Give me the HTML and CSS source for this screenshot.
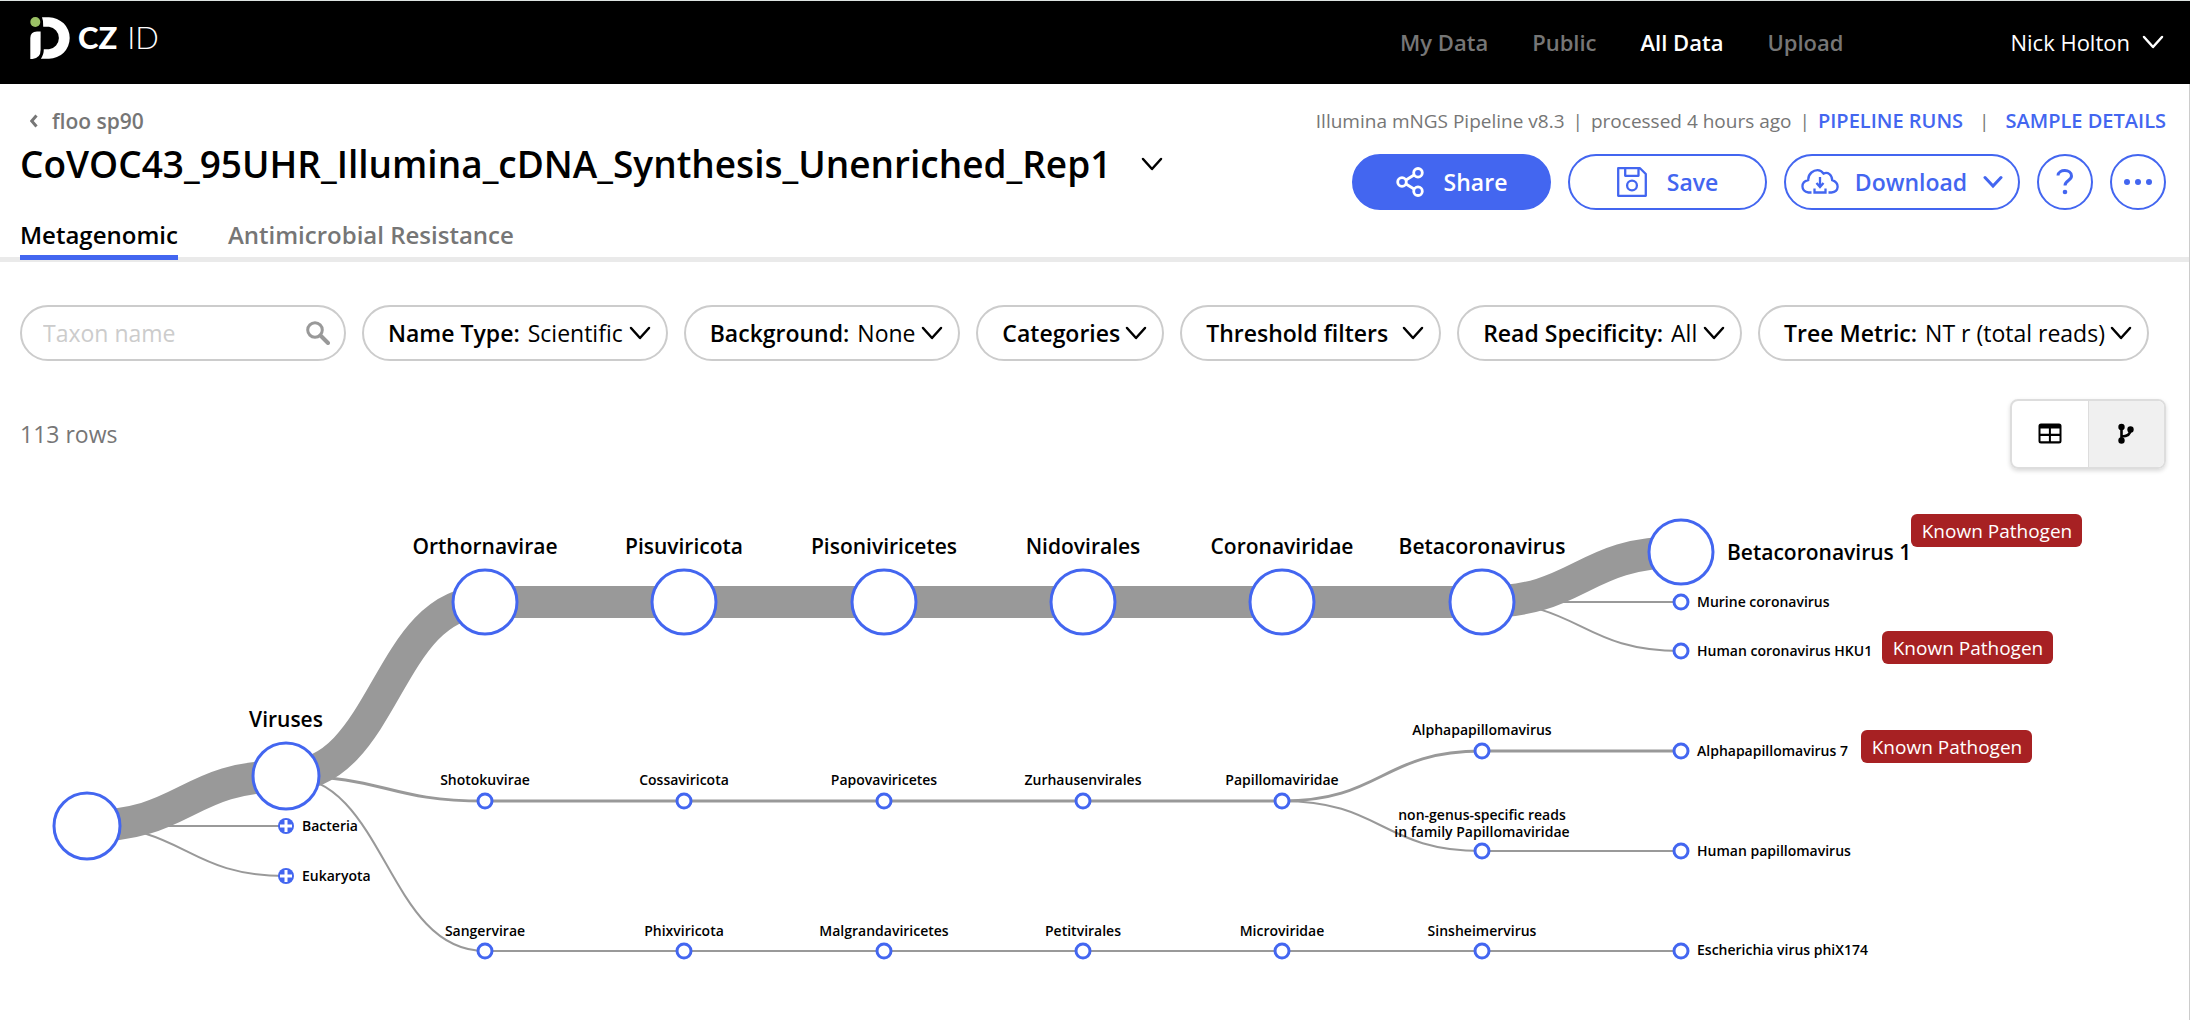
FILE: index.html
```html
<!DOCTYPE html>
<html lang="en">
<head>
<meta charset="utf-8">
<title>CZ ID</title>
<link rel="stylesheet" href="styles.css">
</head>
<body>
<svg class="defs" aria-hidden="true">
  <symbol id="chevron" viewBox="0 0 22 14"><path d="M2 2 11 12 20 2" fill="none" stroke="currentColor" stroke-width="2.500" stroke-linecap="round" stroke-linejoin="round"/></symbol>
</svg>

<header class="topbar">
  <a class="logo" href="#" aria-label="CZ ID home">
    <svg class="logo-mark" width="40" height="42" viewBox="0 0 40 42" aria-hidden="true">
      <circle cx="5.300" cy="5" r="5" fill="#9bc165"/>
      <path d="M0.300 42V21Q0.300 14.500 7 14.500H10.600V33Q10.600 41 2.500 42Z" fill="#fff"/>
      <path d="M12 0.300H19A20.700 20.700 0 0 1 19 41.700H10.800Q13.800 38 13.800 32.300H19A11.400 11.400 0 0 0 19 9.700H13.200Q13.600 4 12 0.300Z" fill="#fff"/>
    </svg>
    <span class="logo-cz">CZ</span>
    <span class="logo-id">ID</span>
  </a>
  <nav class="nav">
    <a href="#">My Data</a>
    <a href="#">Public</a>
    <a class="active" href="#">All Data</a>
    <a href="#">Upload</a>
  </nav>
  <button class="user" type="button">Nick Holton <svg class="chev" width="22" height="14"><use href="#chevron"/></svg></button>
</header>

<main class="page">
  <section class="sample">
    <div class="sample-title">
      <a class="back" href="#"><svg width="8" height="14" viewBox="0 0 8 14" aria-hidden="true"><path d="M6.500 1.500 1.700 7l4.800 5.500" fill="none" stroke="currentColor" stroke-width="3"/></svg>floo sp90</a>
      <div class="title-row">
        <h1>CoVOC43_95UHR_Illumina_cDNA_Synthesis_Unenriched_Rep1</h1>
        <button class="plain" type="button" aria-label="Switch sample"><svg width="22" height="14"><use href="#chevron"/></svg></button>
      </div>
    </div>
    <div class="sample-side">
      <p class="meta"><span>Illumina mNGS Pipeline v8.3</span><span class="bar">|</span><span>processed 4 hours ago</span><span class="bar">|</span><a href="#">PIPELINE RUNS</a><span class="bar wide">|</span><a href="#">SAMPLE DETAILS</a></p>
      <div class="actions">
        <button class="btn primary" type="button">
          <svg width="28" height="30" viewBox="0 0 28 30" fill="none" stroke="currentColor" stroke-width="2.800" aria-hidden="true"><circle cx="6" cy="15" r="4.300"/><circle cx="22" cy="5.800" r="4.300"/><circle cx="22" cy="24.200" r="4.300"/><path d="M10 13 18 8M10 17l8 5"/></svg>
          Share</button>
        <button class="btn" type="button">
          <svg width="30" height="30" viewBox="0 0 30 30" fill="none" stroke="currentColor" stroke-width="2.300" stroke-linejoin="round" aria-hidden="true"><path d="M1.200 1.200H23L28.800 7V28.800H1.200ZM8.200 1.200V8.800H21.500V1.200"/><circle cx="15" cy="18.500" r="4.900"/></svg>
          Save</button>
        <button class="btn download" type="button">
          <svg width="38" height="26" viewBox="0 0 38 26" fill="none" stroke="currentColor" stroke-width="2.300" aria-hidden="true"><path d="M10.500 23.500H7.500C-.5 22-.5 13 7.200 11.200 7 4 13 1.200 16.500 1.200c2.500 0 4.500 1.200 6 3.400C27 2.500 31 6 31.200 11.200 39 14 38 23 30.500 23.500H27.500M19 8V17.500M15.500 14l3.500 4 3.500-4M13.500 19.500V23.500H24.500V19.500"/></svg>
          Download
          <svg class="chev bold" width="20" height="14" viewBox="0 0 20 14" aria-hidden="true"><path d="M2 2.500 10 11 18 2.500" fill="none" stroke="currentColor" stroke-width="3" stroke-linecap="round"/></svg></button>
        <button class="btn round" type="button" aria-label="Help"><svg width="18" height="26" viewBox="0 0 18 26" aria-hidden="true"><path d="M2 6.500C2.500-.3 15.500 0 15.500 7c0 4.500-6.500 4.500-6.500 9.500" fill="none" stroke="currentColor" stroke-width="3"/><circle cx="9" cy="23" r="2.300" fill="currentColor"/></svg></button>
        <button class="btn round" type="button" aria-label="More"><svg width="30" height="8" viewBox="0 0 30 8" fill="currentColor" aria-hidden="true"><circle cx="4" cy="4" r="3"/><circle cx="15" cy="4" r="3"/><circle cx="26" cy="4" r="3"/></svg></button>
      </div>
    </div>
  </section>

  <nav class="tabs">
    <a class="active" href="#">Metagenomic</a>
    <a href="#">Antimicrobial Resistance</a>
  </nav>

  <form class="filters">
    <label class="pill search">
      <input type="text" placeholder="Taxon name" aria-label="Taxon name">
      <svg width="24" height="24" viewBox="0 0 24 24" fill="none" stroke="#999" aria-hidden="true"><circle cx="9" cy="9" r="7.300" stroke-width="3"/><path d="M14.500 14.500 22 22" stroke-width="4" stroke-linecap="round"/></svg>
    </label>
    <label class="pill"><span>Name Type:</span><select><option>Scientific</option></select><svg class="chev" width="22" height="14"><use href="#chevron"/></svg></label>
    <label class="pill"><span>Background:</span><select><option>None</option></select><svg class="chev" width="22" height="14"><use href="#chevron"/></svg></label>
    <button class="pill" type="button"><span>Categories</span><svg class="chev" width="22" height="14"><use href="#chevron"/></svg></button>
    <button class="pill spaced" type="button"><span>Threshold filters</span><svg class="chev" width="22" height="14"><use href="#chevron"/></svg></button>
    <label class="pill"><span>Read Specificity:</span><select><option>All</option></select><svg class="chev" width="22" height="14"><use href="#chevron"/></svg></label>
    <label class="pill"><span>Tree Metric:</span><select><option>NT r (total reads)</option></select><svg class="chev" width="22" height="14"><use href="#chevron"/></svg></label>
  </form>

  <div class="results">
    <p>113 rows</p>
    <div class="views">
      <button type="button" aria-label="Table view"><svg width="24" height="22" viewBox="0 0 24 22" aria-hidden="true"><path fill="#000" fill-rule="evenodd" d="M3 .5H21A2.500 2.500 0 0 1 23.500 3V18A2.500 2.500 0 0 1 21 20.500H3A2.500 2.500 0 0 1 .5 18V3A2.500 2.500 0 0 1 3 .5ZM2.500 5.500V10.700H10.900V5.500ZM12.900 5.500V10.700H21.500V5.500ZM2.500 13V18.300H10.900V13ZM12.900 13V18.300H21.500V13Z"/></svg></button>
      <button class="on" type="button" aria-label="Tree view"><svg width="18" height="22" viewBox="0 0 18 22" aria-hidden="true"><circle cx="4.500" cy="4" r="3.200"/><circle cx="13.500" cy="6.500" r="3.200"/><circle cx="4.500" cy="17.500" r="3.200"/><path d="M4.500 4V17.500M4.500 13.500C10 13.500 13.500 12 13.500 6.500" fill="none" stroke="#000" stroke-width="2.600"/></svg></button>
    </div>
  </div>

  <svg class="tree" role="img" aria-label="Taxonomic tree">
    <g class="links">
      <g class="w1">
        <path d="M87 346H286M87 346C186 346 186 396 286 396M286 296C386 296 386 471 485 471H1681"/>
        <path d="M1482 122H1681M1482 122C1581 122 1581 171 1681 171M1282 321C1382 321 1382 371 1482 371H1681"/>
      </g>
      <path class="w2" d="M286 296C386 296 386 321 485 321H1282C1382 321 1382 271 1482 271H1681"/>
      <path class="w3" d="M87 346C186 346 186 296 286 296C386 296 386 122 485 122H1482C1581 122 1581 72 1681 72"/>
    </g>
    <g class="nodes big">
      <circle cx="87" cy="346" r="33"/><circle cx="286" cy="296" r="33"/>
      <circle cx="485" cy="122" r="32"/><circle cx="684" cy="122" r="32"/><circle cx="884" cy="122" r="32"/><circle cx="1083" cy="122" r="32"/><circle cx="1282" cy="122" r="32"/><circle cx="1482" cy="122" r="32"/><circle cx="1681" cy="72" r="32"/>
    </g>
    <g class="nodes">
      <circle cx="485" cy="321" r="7"/><circle cx="684" cy="321" r="7"/><circle cx="884" cy="321" r="7"/><circle cx="1083" cy="321" r="7"/><circle cx="1282" cy="321" r="7"/>
      <circle cx="1482" cy="271" r="7"/><circle cx="1681" cy="271" r="7"/><circle cx="1482" cy="371" r="7"/><circle cx="1681" cy="371" r="7"/>
      <circle cx="1681" cy="122" r="7"/><circle cx="1681" cy="171" r="7"/>
      <circle cx="485" cy="471" r="7"/><circle cx="684" cy="471" r="7"/><circle cx="884" cy="471" r="7"/><circle cx="1083" cy="471" r="7"/><circle cx="1282" cy="471" r="7"/><circle cx="1482" cy="471" r="7"/><circle cx="1681" cy="471" r="7"/>
    </g>
    <g class="closed">
      <circle cx="286" cy="346" r="8"/><circle cx="286" cy="396" r="8"/>
      <path d="M280 346H292M286 340V352M280 396H292M286 390V402"/>
    </g>
    <g class="label large mid">
      <text x="286" y="247">Viruses</text><text x="485" y="74">Orthornavirae</text><text x="684" y="74">Pisuviricota</text><text x="884" y="74">Pisoniviricetes</text><text x="1083" y="74">Nidovirales</text><text x="1282" y="74">Coronaviridae</text><text x="1482" y="74">Betacoronavirus</text>
    </g>
    <g class="label large"><text x="1727" y="80">Betacoronavirus 1</text></g>
    <g class="label mid">
      <text x="485" y="305">Shotokuvirae</text><text x="684" y="305">Cossaviricota</text><text x="884" y="305">Papovaviricetes</text><text x="1083" y="305">Zurhausenvirales</text><text x="1282" y="305">Papillomaviridae</text>
      <text x="1482" y="255">Alphapapillomavirus</text><text x="1482" y="340">non-genus-specific reads</text><text x="1482" y="357">in family Papillomaviridae</text>
      <text x="485" y="456">Sangervirae</text><text x="684" y="456">Phixviricota</text><text x="884" y="456">Malgrandaviricetes</text><text x="1083" y="456">Petitvirales</text><text x="1282" y="456">Microviridae</text><text x="1482" y="456">Sinsheimervirus</text>
    </g>
    <g class="label">
      <text x="302" y="351">Bacteria</text><text x="302" y="401">Eukaryota</text>
      <text x="1697" y="127">Murine coronavirus</text><text x="1697" y="176">Human coronavirus HKU1</text><text x="1697" y="276">Alphapapillomavirus 7</text><text x="1697" y="376">Human papillomavirus</text><text x="1697" y="475">Escherichia virus phiX174</text>
    </g>
    <g class="badge">
      <rect x="1911" y="34" width="171" height="33" rx="6"/><text x="1997" y="58">Known Pathogen</text>
      <rect x="1882" y="151" width="171" height="33" rx="6"/><text x="1968" y="175">Known Pathogen</text>
      <rect x="1861" y="250" width="171" height="33" rx="6"/><text x="1947" y="274">Known Pathogen</text>
    </g>
  </svg>
</main>
</body>
</html>
```
FILE: styles.css
```css
* { box-sizing: border-box; }

body {
  margin: 0;
  background: #fff;
  color: #000;
  font: 23px/30px "Open Sans", sans-serif;
}

a { color: inherit; text-decoration: none; }
p, h1 { margin: 0; }
button, input, select { font: inherit; color: inherit; }
button { padding: 0; border: 0; background: none; }
svg { display: block; flex: none; }
.defs { position: absolute; width: 0; height: 0; }

.topbar {
  display: flex;
  align-items: center;
  height: 84px;
  padding: 0 26px 2px 30px;
  border-top: 1px solid #dde3e1;
  background: #000;
  color: #fff;
  font-size: 22px;
}
.logo { display: flex; align-items: center; margin: 0 auto 8px 0; font: 31px/40px Lato, sans-serif; }
.logo span { padding-bottom: 2px; }
.logo-cz { margin-left: 8px; font-weight: 900; }
.logo-id { margin-left: 10px; font-weight: 300; }
.nav { display: flex; gap: 44px; color: #767676; font-weight: 600; }
.nav .active { color: #fff; }
.user { display: flex; align-items: center; gap: 12px; margin-left: 167px; }

.page { min-height: calc(100vh - 84px); border-right: 1px solid #ccc; }

.sample { display: flex; justify-content: space-between; padding: 21px 23px 0 20px; }
.back { display: flex; align-items: center; gap: 14px; padding: 0 10px; font-size: 21px; font-weight: 600; line-height: 32px; color: #767676; }
.title-row { display: flex; align-items: center; gap: 30px; }
h1 { font-size: 37px; line-height: 54px; font-weight: 600; }
.plain { display: flex; }

.sample-side { display: flex; flex-direction: column; align-items: flex-end; gap: 17px; }
.meta { display: flex; gap: 8px; font-size: 19px; line-height: 32px; color: #767676; }
.meta a { color: #4366f0; font-size: 20px; font-weight: 600; }
.meta .wide { padding: 0 8px; }
.actions { display: flex; gap: 17px; }
.btn {
  display: flex;
  align-items: center;
  justify-content: center;
  gap: 20px;
  width: 199px;
  height: 56px;
  border: 2px solid #4366f0;
  border-radius: 28px;
  background: #fff;
  color: #4366f0;
  font-weight: 600;
}
.primary { background: #4366f0; color: #fff; }
.download { width: 236px; gap: 16px; }
.round { width: 56px; }

.tabs { display: flex; gap: 50px; height: 52px; padding: 0 20px; border-bottom: 5px solid #eaeaea; color: #767676; font-size: 24px; font-weight: 600; }
.tabs a { height: 50px; padding-top: 10px; border-bottom: 5px solid transparent; }
.tabs .active { border-color: #4366f0; color: #000; }

.filters { display: flex; gap: 16px; padding: 43px 23px 0 20px; }
.pill {
  display: flex;
  flex: none;
  align-items: center;
  height: 56px;
  padding: 0 15px 0 24px;
  border: 2px solid #ccc;
  border-radius: 28px;
  white-space: nowrap;
}
.pill span { font-weight: 600; }
.pill select { margin: 0 0 0 8px; padding: 0; border: 0; background: none; appearance: none; }
.pill .chev { margin-left: 5px; }
.spaced .chev { margin-left: 14px; }
.search { width: 326px; padding: 0 14px 0 21px; justify-content: space-between; }
.search input { flex: 1; width: 0; min-width: 0; border: 0; padding: 0; outline: 0; background: none; }
.search input::placeholder { color: #ccc; opacity: 1; }

.results { display: flex; justify-content: space-between; align-items: center; padding: 38px 23px 0 20px; color: #767676; }
.views { display: flex; width: 156px; height: 70px; border: 2px solid #ddd; border-radius: 8px; box-shadow: 0 2px 4px rgba(0, 0, 0, .15); overflow: hidden; }
.views button { display: flex; flex: 1; align-items: center; justify-content: center; }
.views .on { background: #f0f0f0; border-left: 1px solid #ddd; }

.tree { width: 100%; height: 520px; margin-top: 11px; }
.links path { fill: none; stroke: #999; }
.links .w1 path { stroke-width: 2px; }
.links .w2 { stroke-width: 3px; }
.links .w3 { stroke-width: 32px; }
.nodes circle { fill: #fff; stroke: #4366f0; stroke-width: 3px; }
.closed circle { fill: #4366f0; }
.closed path { stroke: #fff; stroke-width: 3px; }
.label text { font-size: 14px; font-weight: 600; }
.large text { font-size: 21px; }
.mid text, .badge text { text-anchor: middle; }
.badge rect { fill: #a72123; }
.badge text { fill: #fff; font-size: 19px; }
```
